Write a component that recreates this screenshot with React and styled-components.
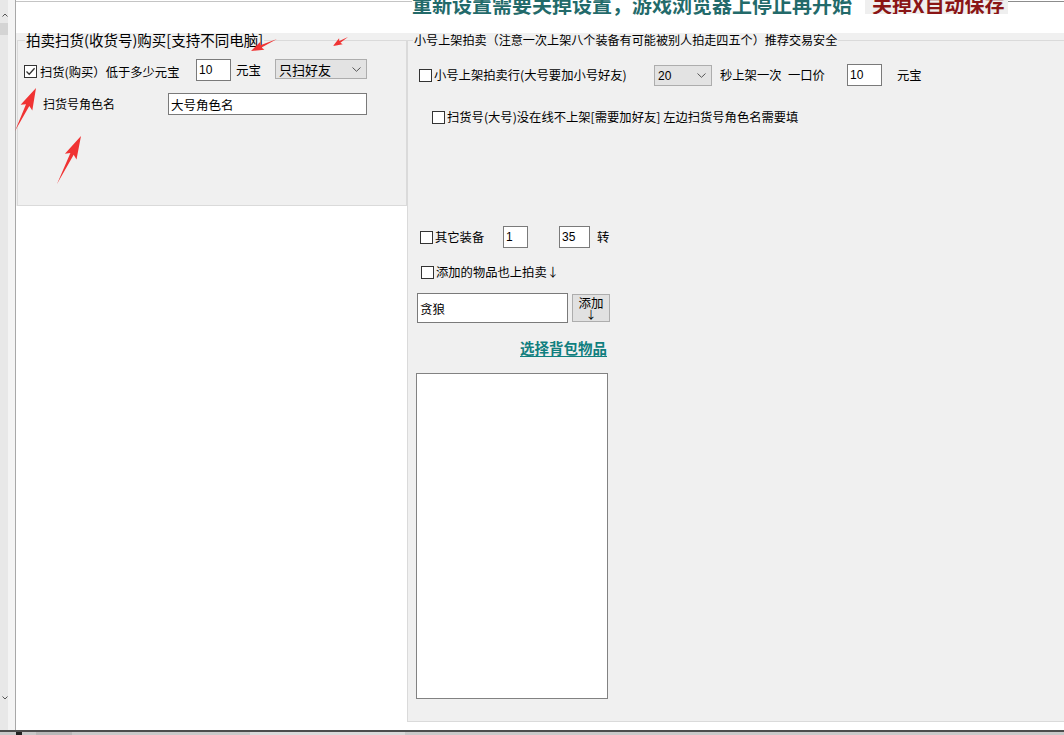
import React from 'react';
import styled, { createGlobalStyle } from 'styled-components';

const GlobalStyle = createGlobalStyle`
  html, body { margin: 0; padding: 0; background: #fff; }
  body {
    font-family: "Noto Sans CJK SC", "Noto Sans", sans-serif;
    font-size: 12px;
    color: #000;
  }
  * { box-sizing: border-box; }
`;

const CJK = `"Noto Sans CJK SC", "Noto Sans", sans-serif`;

const Window = styled.div`
  position: relative;
  width: 1064px;
  height: 735px;
  overflow: hidden;
  display: flex;
  flex-direction: column;
  background: #fff;
`;

const Main = styled.div`
  display: flex;
  height: 730px;
`;

const SideStrip = styled.div`
  width: 16px;
  flex: none;
  background: linear-gradient(to right, #e8e8e8 0 8px, #f4f4f4 8px);
  border-right: 1px solid #a8a8a8;
  display: flex;
  flex-direction: column;
  align-items: flex-start;
`;

const StripChevron = styled.svg`
  margin: ${p => p.$m};
  flex: none;
`;

const StripThumb = styled.div`
  width: 8px;
  height: 12px;
  background: #d4d4d4;
  margin-top: 6px;
`;

const Grow = styled.div`
  flex: 1;
`;

const Content = styled.div`
  flex: 1;
  display: flex;
  flex-direction: column;
  min-width: 0;
`;

const TopBar = styled.div`
  height: 33px;
  display: flex;
  align-items: flex-start;
  flex: none;
`;

const TopLeftLine = styled.div`
  width: 396px;
  flex: none;
  margin-top: 1px;
  border-top: 1px solid #c4c4c4;
`;

const BannerClip = styled.div`
  height: ${p => p.$h}px;
  width: ${p => p.$w}px;
  flex: none;
  overflow: hidden;
  background: ${p => p.$bg};
  padding-left: ${p => p.$pl || 0}px;
`;

const BannerText = styled.span`
  display: block;
  margin-top: -5px;
  font-family: ${CJK};
  font-weight: 700;
  font-size: 20px;
  line-height: 20px;
  white-space: nowrap;
  color: ${p => p.$color};
`;

const TopTail = styled.div`
  flex: 1;
  margin-top: 1px;
  border-top: 1px solid #8c8c8c;
`;

const Body = styled.div`
  flex: 1;
  display: flex;
`;

const LeftCol = styled.div`
  width: 391px;
  flex: none;
  display: flex;
  flex-direction: column;
`;

const RightCol = styled.div`
  flex: 1;
  display: flex;
  flex-direction: column;
`;

const GroupWrap = styled.div`
  background: #f0f0f0;
  padding-left: ${p => p.$pl || 0}px;
  flex: none;
`;

const Group = styled.fieldset`
  margin: 0;
  padding: 0;
  border: 1px solid #dadada;
  ${p => p.$noRight && 'border-right: none;'}
  min-width: 0;
`;

const Legend = styled.legend`
  margin-left: ${p => p.$ml}px;
  padding: 0 1px;
  font-family: ${CJK};
  font-size: ${p => p.$fs}px;
  line-height: 14px;
  height: 14px;
  white-space: nowrap;
  color: #000;
`;

const GroupInner = styled.div`
  height: ${p => p.$h}px;
  padding-left: ${p => p.$pl}px;
  display: flex;
  flex-direction: column;
  align-items: flex-start;
`;

const Row = styled.div`
  display: flex;
  align-items: ${p => p.$align || 'center'};
  height: ${p => p.$h}px;
  margin-top: ${p => p.$mt}px;
  margin-left: ${p => p.$ml || 0}px;
  flex: none;
`;

const BoxOuter = styled.span`
  width: 13px;
  height: 13px;
  flex: none;
  border: 1px solid #333;
  background: #fff;
  display: flex;
  align-items: center;
  justify-content: center;
  margin-top: ${p => p.$mt || 0}px;
`;

const Label = styled.span`
  font-family: ${CJK};
  font-size: ${p => p.$fs || 12}px;
  line-height: ${p => p.$lh || 16}px;
  white-space: nowrap;
  flex: none;
  margin-left: ${p => p.$ml || 0}px;
  padding-top: ${p => p.$pt || 0}px;
  ${p => p.$w && `width: ${p.$w}px;`}
`;

const TextBox = styled.div`
  width: ${p => p.$w}px;
  height: ${p => p.$h || 22}px;
  flex: none;
  margin-left: ${p => p.$ml || 0}px;
  border: 1px solid #7a7a7a;
  background: #fff;
  display: flex;
  align-items: center;
  padding-left: 2px;
  font-family: ${p => (p.$num ? '"Liberation Sans", Arial, sans-serif' : CJK)};
  font-size: ${p => (p.$num ? 12 : 12.5)}px;
  white-space: nowrap;
  overflow: hidden;
`;

const Select = styled.div`
  width: ${p => p.$w}px;
  height: ${p => p.$h}px;
  flex: none;
  margin-left: ${p => p.$ml || 0}px;
  margin-top: ${p => p.$mt || 0}px;
  border: 1px solid #adadad;
  background: #e3e3e3;
  display: flex;
  align-items: center;
  justify-content: space-between;
  padding: 0 5px 0 3px;
  font-family: ${p => (p.$num ? '"Liberation Sans", Arial, sans-serif' : CJK)};
  font-size: ${p => (p.$num ? 12 : 13)}px;
  white-space: nowrap;
`;

const PushButton = styled.div`
  width: 38px;
  height: 28px;
  flex: none;
  margin-left: 4px;
  margin-top: 1px;
  border: 1px solid #adadad;
  background: #e1e1e1;
  display: flex;
  flex-direction: column;
  align-items: center;
  font-family: ${CJK};
  font-size: 12.5px;
  padding-top: 1px;
`;

const ButtonLine = styled.span`
  display: block;
  line-height: ${p => p.$lh}px;
  height: ${p => p.$lh}px;
  font-size: ${p => p.$fs}px;
`;

const ListCol = styled.div`
  width: 192px;
  margin-left: -3px;
  display: flex;
  flex-direction: column;
  flex: none;
`;

const LinkText = styled.a`
  display: block;
  height: 18px;
  margin-top: 16px;
  padding-right: 1px;
  text-align: right;
  font-family: ${CJK};
  font-weight: 700;
  font-size: 14.5px;
  line-height: 18px;
  color: #117f7f;
  text-decoration: underline;
  text-underline-offset: 2px;
  white-space: nowrap;
`;

const ListBox = styled.div`
  width: 192px;
  height: 326px;
  margin-top: 16px;
  border: 1px solid #828282;
  background: #fff;
`;

const WhiteFill = styled.div`
  flex: 1;
  background: #fff;
`;

const BottomBar = styled.div`
  height: 5px;
  flex: none;
  border-top: 2px solid #4c4c4c;
  background: #c9c9c9;
  display: flex;
`;

const TaskBit = styled.div`
  width: ${p => p.$w}px;
  margin-left: ${p => p.$ml}px;
  background: ${p => p.$bg};
  flex: none;
`;

const Overlay = styled.svg`
  position: absolute;
  left: 0;
  top: 0;
  pointer-events: none;
`;

function Chevron() {
  return (
    <svg width="9" height="5" viewBox="0 0 9 5">
      <path d="M0.5 0.5 L4.5 4.3 L8.5 0.5" fill="none" stroke="#555" strokeWidth="1" />
    </svg>
  );
}

function CheckBox({ checked, mt }) {
  return (
    <BoxOuter $mt={mt}>
      {checked && (
        <svg width="11" height="11" viewBox="0 0 11 11">
          <path d="M1.5 5.5 L4.2 8.2 L9.6 2.2" fill="none" stroke="#333" strokeWidth="1.3" />
        </svg>
      )}
    </BoxOuter>
  );
}

function arrowPoints([tx, ty], [hx, hy], h, w1, w2) {
  const dx = hx - tx;
  const dy = hy - ty;
  const L = Math.hypot(dx, dy);
  const ux = dx / L;
  const uy = dy / L;
  const nx = -uy;
  const ny = ux;
  const bx = tx + ux * (L - h);
  const by = ty + uy * (L - h);
  const bbx = tx + ux * (L - h * 1.15);
  const bby = ty + uy * (L - h * 1.15);
  const pts = [
    [tx, ty],
    [bx + nx * w1, by + ny * w1],
    [bbx + nx * w2, bby + ny * w2],
    [hx, hy],
    [bbx - nx * w2, bby - ny * w2],
    [bx - nx * w1, by - ny * w1],
  ];
  return pts.map(p => p.map(v => v.toFixed(1)).join(',')).join(' ');
}

const ARROWS = [
  { t: [277, 39], h: [251, 51], hl: 11, w1: 1.3, w2: 4.5 },
  { t: [348, 37], h: [333, 46], hl: 8, w1: 1, w2: 3.5 },
  { t: [15, 131], h: [36, 88], hl: 19, w1: 1.8, w2: 6.5 },
  { t: [57, 184], h: [81, 136], hl: 20, w1: 1.8, w2: 6.5 },
];

export default function App() {
  return (
    <Window>
      <GlobalStyle />
      <Main>
        <SideStrip>
          <StripChevron width="6" height="4" viewBox="0 0 6 4" $m="13px 0 0 2px">
            <path d="M0.5 3.5 L3 1 L5.5 3.5" fill="none" stroke="#555" strokeWidth="1" />
          </StripChevron>
          <StripThumb />
          <Grow />
          <StripChevron width="6" height="4" viewBox="0 0 6 4" $m="0 0 30px 2px">
            <path d="M0.5 0.5 L3 3 L5.5 0.5" fill="none" stroke="#555" strokeWidth="1" />
          </StripChevron>
        </SideStrip>

        <Content>
          <TopBar>
            <TopLeftLine />
            <BannerClip $h={16} $w={453} $bg="#fff">
              <BannerText $color="#236a6a">重新设置需要关掉设置，游戏浏览器上停止再开始</BannerText>
            </BannerClip>
            <BannerClip $h={14} $w={143} $bg="#efefef" $pl={7}>
              <BannerText $color="#8a1515">关掉X自动保存</BannerText>
            </BannerClip>
            <TopTail />
          </TopBar>

          <Body>
            <LeftCol>
              <GroupWrap $pl={1}>
                <Group>
                  <Legend $ml={7} $fs={14.5}>拍卖扫货(收货号)购买[支持不同电脑]</Legend>
                  <GroupInner $h={158} $pl={6}>
                    <Row $h={22} $mt={12} $align="flex-start">
                      <CheckBox checked mt={6} />
                      <Label $ml={3} $w={156} $pt={5} $fs={12.3}>扫货(购买）低于多少元宝</Label>
                      <TextBox $w={35} $num>10</TextBox>
                      <Label $ml={5} $w={39} $pt={3} $fs={12.5}>元宝</Label>
                      <Select $w={92} $h={20}>
                        <span>只扫好友</span>
                        <Chevron />
                      </Select>
                    </Row>
                    <Row $h={22} $mt={12} $ml={19}>
                      <Label $w={125} $fs={12}>扫货号角色名</Label>
                      <TextBox $w={199}>大号角色名</TextBox>
                    </Row>
                  </GroupInner>
                </Group>
              </GroupWrap>
              <WhiteFill />
            </LeftCol>

            <RightCol>
              <GroupWrap>
                <Group $noRight>
                  <Legend $ml={5} $fs={12.1}>小号上架拍卖（注意一次上架八个装备有可能被别人拍走四五个）推荐交易安全</Legend>
                  <GroupInner $h={674} $pl={11}>
                    <Row $h={22} $mt={17}>
                      <CheckBox />
                      <Label $ml={2} $w={220} $fs={12.3}>小号上架拍卖行(大号要加小号好友)</Label>
                      <Select $w={58} $h={21} $mt={1} $num>
                        <span>20</span>
                        <Chevron />
                      </Select>
                      <Label $ml={8} $w={68} $fs={12.3}>秒上架一次</Label>
                      <Label $w={59} $fs={12.3}>一口价</Label>
                      <TextBox $w={35} $num>10</TextBox>
                      <Label $ml={15} $fs={12.3}>元宝</Label>
                    </Row>
                    <Row $h={16} $mt={23} $ml={13}>
                      <CheckBox />
                      <Label $ml={2} $fs={12.3}>扫货号(大号)没在线不上架[需要加好友] 左边扫货号角色名需要填</Label>
                    </Row>
                    <Row $h={22} $mt={101} $ml={1}>
                      <CheckBox />
                      <Label $ml={2} $w={68} $fs={12.3}>其它装备</Label>
                      <TextBox $w={25} $num>1</TextBox>
                      <TextBox $w={31} $ml={31} $num>35</TextBox>
                      <Label $ml={7} $fs={12.3}>转</Label>
                    </Row>
                    <Row $h={16} $mt={16} $ml={2}>
                      <CheckBox />
                      <Label $ml={2} $fs={12.3}>添加的物品也上拍卖↓</Label>
                    </Row>
                    <Row $h={30} $mt={13} $ml={-2} $align="flex-start">
                      <TextBox $w={151} $h={30}>贪狼</TextBox>
                      <PushButton>
                        <ButtonLine $lh={13} $fs={12.5}>添加</ButtonLine>
                        <ButtonLine $lh={11} $fs={11}>↓</ButtonLine>
                      </PushButton>
                    </Row>
                    <ListCol>
                      <LinkText>选择背包物品</LinkText>
                      <ListBox />
                    </ListCol>
                  </GroupInner>
                </Group>
              </GroupWrap>
              <WhiteFill />
            </RightCol>
          </Body>
        </Content>
      </Main>
      <BottomBar>
        <TaskBit $w={6} $ml={16} $bg="#222" />
        <TaskBit $w={36} $ml={14} $bg="#b8b8b8" />
        <TaskBit $w={155} $ml={178} $bg="#dadada" />
      </BottomBar>

      <Overlay width="1064" height="735" viewBox="0 0 1064 735">
        {ARROWS.map((a, i) => (
          <polygon key={i} points={arrowPoints(a.t, a.h, a.hl, a.w1, a.w2)} fill="#f03333" />
        ))}
      </Overlay>
    </Window>
  );
}
